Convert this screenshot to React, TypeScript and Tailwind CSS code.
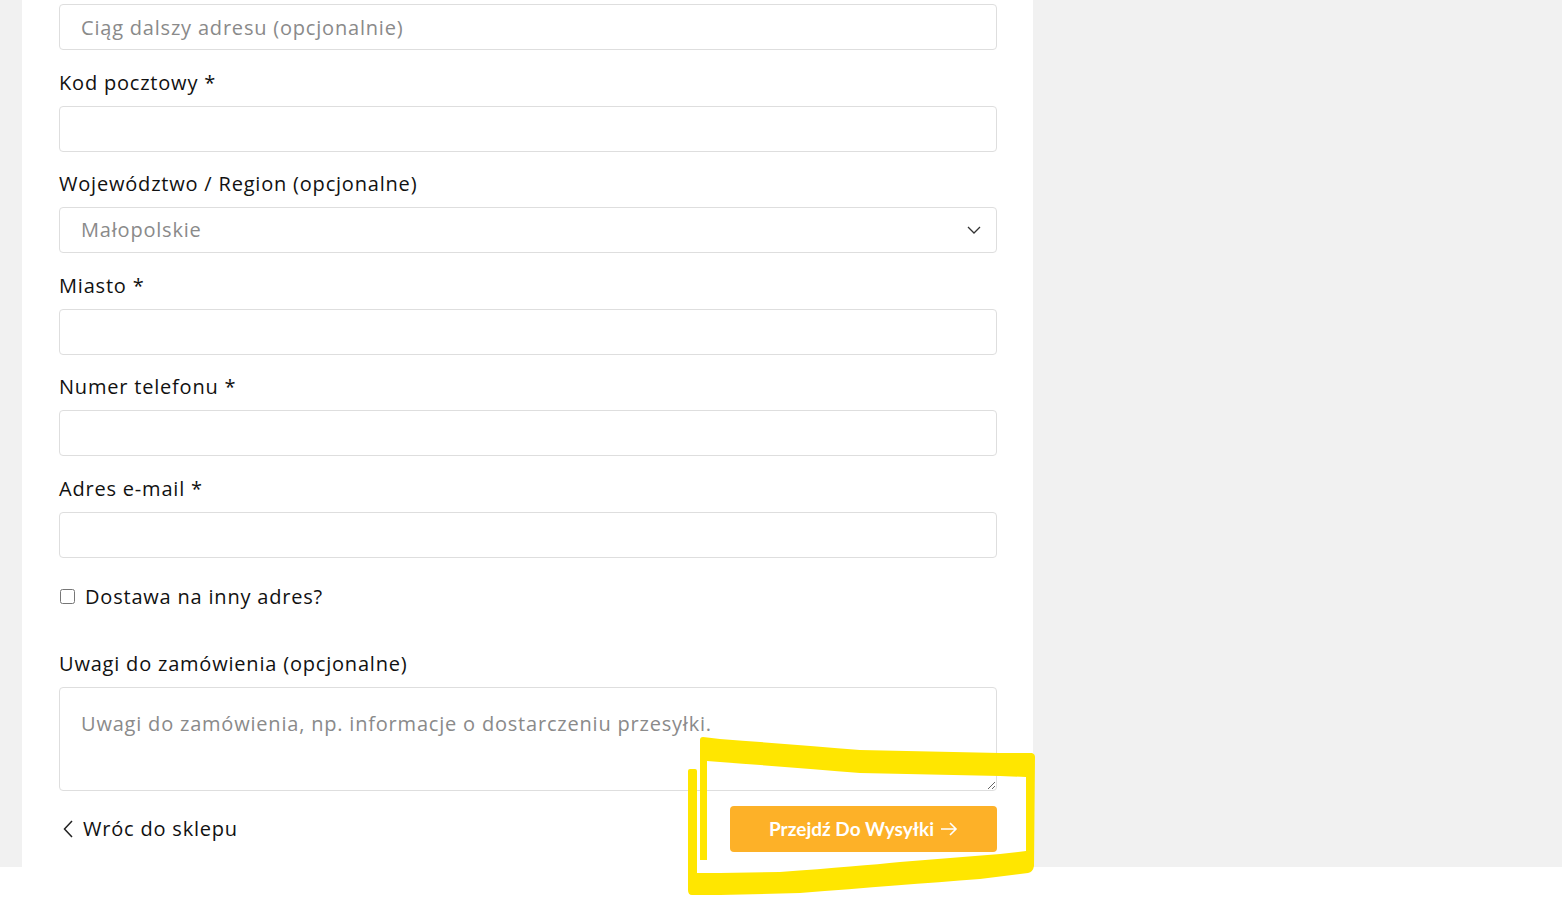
import React from "react";

const font = "font-['Open_Sans',sans-serif] tracking-[0.8px]";

function Label({ children }: { children: React.ReactNode }) {
  return <div className="mt-[17.6px] mb-[8px] text-[20px] leading-[30px] text-[#111]">{children}</div>;
}

function Field({ label }: { label: string }) {
  return (
    <>
      <Label>{label}</Label>
      <input
        type="text"
        className="block h-[46px] w-full rounded-[4px] border border-[#dedede] bg-white px-[21px] text-[20px] outline-none"
      />
    </>
  );
}

function Highlight() {
  // marker scribble around the submit button
  return (
    <svg className="pointer-events-none absolute left-0 top-0" width="1562" height="897" viewBox="0 0 1562 897">
      <path
        fill="#ffe600"
        d="M700,740 Q700,737 703,737 L720,739 Q800,745 860,750 L1000,753 L1032,753 Q1035,754 1035,757 L1034,866 Q1033,872 1028,873 L980,879 Q900,885 800,893 L720,895 L692,895 Q688,895 688,890 L688,771 Q688,769 690,769 L695,769 Q697,769 697,771 L697,873 L720,873 L780,872 Q860,866 900,862 L1000,854 L1026,851 L1026,777 L1000,776 L860,773 Q800,768 720,762 L707,761 L707,860 L700,860 Z"
      />
    </svg>
  );
}

export default function App() {
  return (
    <div className={`relative h-[897px] w-[1562px] overflow-hidden bg-white ${font}`}>
      <div className="flex h-[867px] bg-[#f1f1f1]">
        <div className="ml-[22px] flex w-[1011px] flex-col bg-white pl-[37px] pr-[36px] pt-[4px]">
          <input
            type="text"
            placeholder="Ciąg dalszy adresu (opcjonalnie)"
            className="block h-[46px] w-full rounded-[4px] border border-[#dedede] bg-white px-[21px] text-[20px] outline-none placeholder:text-[#8a8a8a]"
          />
          <Field label="Kod pocztowy *" />
          <Label>Województwo / Region (opcjonalne)</Label>
          <div className="flex h-[46px] w-full items-center justify-between rounded-[4px] border border-[#dedede] pl-[21px] pr-[15px] text-[20px] text-[#8a8a8a]">
            <span>Małopolskie</span>
            <svg width="14" height="8" viewBox="0 0 14 8" fill="none" stroke="#333" strokeWidth="1.3">
              <path d="M1 1l6 6 6-6" />
            </svg>
          </div>
          <Field label="Miasto *" />
          <Field label="Numer telefonu *" />
          <Field label="Adres e-mail *" />

          <label className="mt-[24px] flex h-[30px] items-center gap-[10px] text-[20px] text-[#111]">
            <input type="checkbox" className="ml-[1px] h-[15px] w-[15px]" />
            <span>Dostawa na inny adres?</span>
          </label>

          <div className="mt-[37px] mb-[8px] text-[20px] leading-[30px] text-[#111]">Uwagi do zamówienia (opcjonalne)</div>
          <textarea
            placeholder="Uwagi do zamówienia, np. informacje o dostarczeniu przesyłki."
            className="block h-[104px] w-full rounded-[4px] border border-[#dedede] px-[21px] pt-[21px] text-[20px] leading-[30px] outline-none placeholder:text-[#8a8a8a]"
          />

          <div className="mt-[15px] flex items-center justify-between">
            <a className="flex items-center gap-[10px] pl-[4px] text-[20px] text-[#111]">
              <svg width="10" height="18" viewBox="0 0 10 18" fill="none" stroke="#222" strokeWidth="1.5">
                <path d="M9 1L1.5 9 9 17" />
              </svg>
              <span>Wróc do sklepu</span>
            </a>
            <button className="flex h-[46px] w-[267px] items-center justify-center gap-[6px] rounded-[4px] bg-[#fdb128] font-['Lato',sans-serif] text-[19px] font-bold tracking-normal text-white">
              <span>Przejdź Do Wysyłki</span>
              <svg width="18" height="14" viewBox="0 0 18 14" fill="none" stroke="#fff" strokeWidth="1.6">
                <path d="M1 7h15M10 1l6 6-6 6" />
              </svg>
            </button>
          </div>
        </div>
      </div>
      <Highlight />
    </div>
  );
}
